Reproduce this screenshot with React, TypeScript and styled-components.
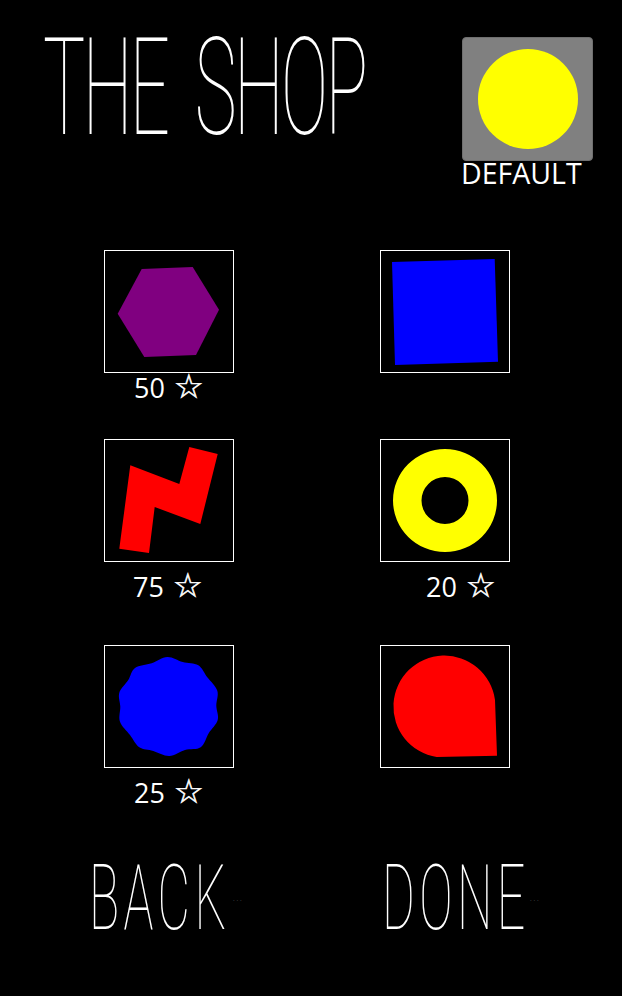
import styled, { createGlobalStyle } from "styled-components"

const GlobalStyle = createGlobalStyle`
    html, body {
        margin: 0;
        padding: 0;
        background: #000;
        overflow: hidden;
    }
`;

// closed smooth path through the points (catmull-rom to bezier)
function smoothPath(pts: number[][]) {
    const n = pts.length
    let d = `M${pts[0][0]} ${pts[0][1]}`
    for (let i = 0; i < n; i++) {
        const p0 = pts[(i - 1 + n) % n], p1 = pts[i], p2 = pts[(i + 1) % n], p3 = pts[(i + 2) % n]
        const c1x = p1[0] + (p2[0] - p0[0]) / 6, c1y = p1[1] + (p2[1] - p0[1]) / 6
        const c2x = p2[0] - (p3[0] - p1[0]) / 6, c2y = p2[1] - (p3[1] - p1[1]) / 6
        d += `C${c1x.toFixed(1)} ${c1y.toFixed(1)} ${c2x.toFixed(1)} ${c2y.toFixed(1)} ${p2[0]} ${p2[1]}`
    }
    return d + "Z"
}

const blob = [
    [232, 51], [278, 66], [325, 76], [352, 112], [382, 152], [379, 197], [383, 240], [356, 280],
    [332, 322], [285, 330], [238, 348], [190, 333], [148, 322], [120, 285], [90, 245], [91, 200],
    [88, 158], [115, 120], [135, 84], [185, 70],
].map(([x, y]) => [+(x / 3 - 14).toFixed(1), +(y / 3 - 5).toFixed(1)])

function Shape({ children }: { children: React.ReactNode }) {
    return <ShapeBox><svg width="128" height="121" viewBox="1 1 128 121">{children}</svg></ShapeBox>
}

function App() {
    return (
        <>
            <GlobalStyle />
            <Page>
                <Header>
                    <TitleSlot><Title>THE SHOP</Title></TitleSlot>
                    <Current>
                        <CurrentSwatch><YellowDot /></CurrentSwatch>
                        <CurrentName>DEFAULT</CurrentName>
                    </Current>
                </Header>
                <Grid>
                    <Cell>
                        <Shape><polygon fill="#800080" points="37.7,19 88.7,17 115,59.7 92,105 40.3,107 13.7,63.7" /></Shape>
                        <Price $top={0} $left={30}>50 <Star>☆</Star></Price>
                    </Cell>
                    <Cell>
                        <Shape><polygon fill="#0000ff" points="12,12 114.7,9 118,111.7 15,115" /></Shape>
                    </Cell>
                    <Cell>
                        <Shape><polygon fill="#ff0000" points="85.3,8 113.7,15 96.3,85 50.7,68 45,114 15.3,109.7 26.3,26.3 75.3,45" /></Shape>
                        <Price $top={10} $left={29}>75 <Star>☆</Star></Price>
                    </Cell>
                    <Cell>
                        <Shape>
                            <path fill="#ffff00" fillRule="evenodd" d="M13 61.5a52 51.5 0 1 0 104 0a52 51.5 0 1 0-104 0ZM41.5 61.5a23.5 23.5 0 1 1 47 0a23.5 23.5 0 1 1-47 0Z" />
                        </Shape>
                        <Price $top={10} $left={46}>20 <Star>☆</Star></Price>
                    </Cell>
                    <Cell>
                        <Shape><path fill="#0000ff" d={smoothPath(blob)} /></Shape>
                        <Price $top={10} $left={30}>25 <Star>☆</Star></Price>
                    </Cell>
                    <Cell>
                        <Shape><path fill="#ff0000" d="M56.7 112A51 51 0 1 1 115 55L117 110.7Z" /></Shape>
                    </Cell>
                </Grid>
                <Footer>
                    <FooterButton>
                        <ButtonSlot $width={135}><ButtonText>BACK</ButtonText></ButtonSlot>
                        <Dots>...</Dots>
                    </FooterButton>
                    <FooterButton>
                        <ButtonSlot $width={139}><ButtonText>DONE</ButtonText></ButtonSlot>
                        <Dots>...</Dots>
                    </FooterButton>
                </Footer>
            </Page>
        </>
    )
}

const Page = styled.div`
    width: 622px;
    height: 996px;
    background: #000;
    color: #fff;
    font-family: "Open Sans", "Noto Sans", sans-serif;
`;

const Header = styled.header`
    display: flex;
    justify-content: space-between;
    padding: 37px 29px 0 43px;
    height: 250px;
    box-sizing: border-box;
`;

// the scaled title keeps its full layout width, so the slot holds the drawn width
const TitleSlot = styled.div`
    width: 322px;
    height: 98px;
`;

const Title = styled.h1`
    margin: 0;
    font-family: Roboto, sans-serif;
    font-weight: 100;
    font-size: 136px;
    line-height: 102px;
    letter-spacing: -5px;
    word-spacing: 25px;
    white-space: nowrap;
    transform: scaleX(0.52);
    transform-origin: left top;
`;

const Current = styled.div`
    width: 131px;
    flex-shrink: 0;
`;

const CurrentSwatch = styled.div`
    width: 131px;
    height: 124px;
    box-sizing: border-box;
    display: flex;
    align-items: center;
    justify-content: center;
    background: #808080;
    border: 1px solid #6f6f6f;
    border-radius: 4px;
`;

const YellowDot = styled.div`
    width: 100px;
    height: 100px;
    border-radius: 50%;
    background: #ffff00;
`;

const CurrentName = styled.div`
    font-size: 28.5px;
    line-height: 25px;
    margin-left: -1px;
    font-weight: 400;
`;

const Grid = styled.main`
    display: grid;
    grid-template-columns: 276px 130px;
    grid-template-rows: 189px 206px 196px;
    padding-left: 104px;
`;

const Cell = styled.div`
    display: flex;
    flex-direction: column;
    align-items: flex-start;
`;

const ShapeBox = styled.div`
    width: 130px;
    height: 123px;
    box-sizing: border-box;
    border: 1px solid #fff;
    display: flex;
    svg { display: block; }
`;

const Price = styled.div<{ $top: number; $left: number }>`
    margin: ${p => p.$top}px 0 0 ${p => p.$left}px;
    font-size: 27px;
    line-height: 30px;
    white-space: nowrap;
    font-family: "Open Sans", "DejaVu Sans", sans-serif;
`;

const Star = styled.span`
    margin-left: 2px;
    font-family: "DejaVu Sans", sans-serif;
    font-size: 33px;
    line-height: 0;
    -webkit-text-stroke: 0.6px #fff;
`;

const Footer = styled.footer`
    display: grid;
    grid-template-columns: 293px 200px;
    padding: 22px 0 0 89px;
`;

const FooterButton = styled.div`
    display: flex;
    align-items: flex-start;
    height: 70px;
`;

const ButtonSlot = styled.div<{ $width: number }>`
    width: ${p => p.$width}px;
    height: 66px;
`;

const ButtonText = styled.div`
    font-family: Roboto, sans-serif;
    font-weight: 100;
    font-size: 91px;
    line-height: 70px;
    letter-spacing: 8px;
    white-space: nowrap;
    transform: scaleX(0.55);
    transform-origin: left top;
`;

const Dots = styled.div`
    margin: 33px 0 0 9px;
    font-family: "Liberation Sans", sans-serif;
    font-size: 6px;
    line-height: 6px;
    letter-spacing: 1.8px;
    color: #777;
`;

export default App
